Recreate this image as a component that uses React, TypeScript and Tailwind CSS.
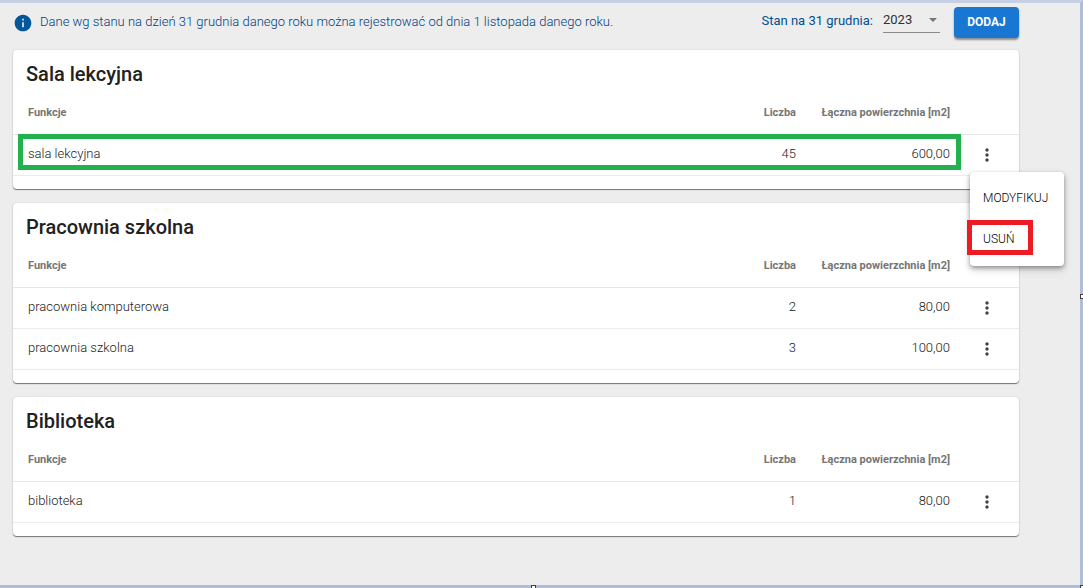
import { MdInfo, MdMoreVert } from "react-icons/md";

type Row = { name: string; count: number; area: string; open?: boolean };

const sections: { title: string; rows: Row[] }[] = [
    {
        title: "Sala lekcyjna",
        rows: [{ name: "sala lekcyjna", count: 45, area: "600,00", open: true }],
    },
    {
        title: "Pracownia szkolna",
        rows: [
            { name: "pracownia komputerowa", count: 2, area: "80,00" },
            { name: "pracownia szkolna", count: 3, area: "100,00" },
        ],
    },
    {
        title: "Biblioteka",
        rows: [{ name: "biblioteka", count: 1, area: "80,00" }],
    },
];

const RowMenu = () => (
    <div
        role="menu"
        className="absolute top-[37px] left-[7px] z-10 w-[94px] rounded bg-white pt-[5px] pb-[7px] text-left shadow-[0_2px_4px_rgba(0,0,0,0.35),0_4px_8px_rgba(0,0,0,0.15)]"
    >
        <button role="menuitem" className="block h-[41px] w-full px-[13px] text-left text-xs font-light text-black">
            MODYFIKUJ
        </button>
        <button role="menuitem" className="relative block h-[41px] w-full px-[13px] text-left text-xs font-light text-black">
            USUŃ
            {/* Red marker around the delete action */}
            <span className="pointer-events-none absolute top-0.5 -left-[3px] h-[35px] w-[66px] border-5 border-[#ed1c24]" />
        </button>
    </div>
);

const Section = ({ title, rows }: { title: string; rows: Row[] }) => (
    <section className="rounded bg-white pb-[13px] shadow-[0_1px_1px_rgba(0,0,0,0.5),0_0_2px_rgba(0,0,0,0.12)]">
        <h2 className="px-[13px] pt-2.5 text-xl leading-7 font-medium text-[#212121]">{title}</h2>
        <table className="w-full border-separate border-spacing-0 text-[13px] text-[#212121]">
            <thead>
                <tr className="h-[47px] text-[11px] text-[#757575]">
                    <th className="border-b border-[#e6e6e6] pt-1 pl-[15px] text-left font-bold">Funkcje</th>
                    <th className="w-32 border-b border-[#e6e6e6] pt-1 pr-[13px] text-right font-bold">Liczba</th>
                    <th className="w-[154px] border-b border-[#e6e6e6] pt-1 pr-[13px] text-right font-bold whitespace-nowrap">
                        Łączna powierzchnia [m2]
                    </th>
                    <td className="w-14 border-b border-[#e6e6e6]" />
                </tr>
            </thead>
            <tbody className="font-light">
                {rows.map((row) => (
                    <tr key={row.name} className="relative h-[41px]">
                        <td className="border-b border-[#ececec] pb-0.5 pl-[15px]">
                            {row.name}
                            {/* Green marker around the selected row */}
                            {row.open && (
                                <span className="pointer-events-none absolute -top-px right-[58px] left-[5px] h-9 border-5 border-[#22b14c]" />
                            )}
                        </td>
                        <td className="border-b border-[#ececec] pr-[13px] pb-0.5 text-right">{row.count}</td>
                        <td className="border-b border-[#ececec] pr-[13px] pb-0.5 text-right">{row.area}</td>
                        <td className="relative border-b border-[#ececec] pl-3.5">
                            <button aria-label="Akcje" className="block text-[#424242]">
                                <MdMoreVert size={20} />
                            </button>
                            {row.open && <RowMenu />}
                        </td>
                    </tr>
                ))}
            </tbody>
        </table>
    </section>
);

export default function App() {
    return (
        <div className="relative min-h-screen border-t-3 border-r-3 border-b-3 border-[#b0bdd6] border-t-[#c7d0e3] bg-[#ededed] font-['Roboto',sans-serif]">
            <main className="mr-[61px] ml-[13px]">
                <header className="flex h-[47px] items-start pt-1 text-[13px] text-[#01508f]">
                    <p className="flex h-8 items-center gap-[7px] font-light text-[#003f7a]">
                        <MdInfo size={20} className="text-[#01579b]" />
                        <span className="pb-0.5">
                            Dane wg stanu na dzień 31 grudnia danego roku można rejestrować od dnia 1 listopada danego roku.
                        </span>
                    </p>
                    <label htmlFor="rok" className="ml-auto flex h-7 items-center">
                        Stan na 31 grudnia:
                    </label>
                    <div className="relative ml-2.5">
                        <select
                            id="rok"
                            defaultValue="2023"
                            className="block h-[26px] w-[57px] appearance-none border-b border-[#8a8a8a] text-[13px] text-[#303030]"
                        >
                            <option>2023</option>
                        </select>
                        {/* Drop-down arrow */}
                        <span className="pointer-events-none absolute top-[11px] right-[3px] border-x-4 border-t-4 border-x-transparent border-t-[#757575]" />
                    </div>
                    <button className="ml-3.5 h-[31px] w-[65px] rounded bg-[#1976d2] pb-0.5 text-xs font-bold text-white shadow-[0_2px_2px_rgba(0,0,0,0.4)]">
                        DODAJ
                    </button>
                </header>
                <div className="flex flex-col gap-3.5">
                    {sections.map((section) => (
                        <Section key={section.title} {...section} />
                    ))}
                </div>
            </main>
            {/* Resize handles of the frame */}
            <span className="absolute top-1/2 -right-[3px] h-[5px] w-[3px] border border-r-0 border-[#404040] bg-white" />
            <span className="absolute -right-[3px] -bottom-[3px] size-[3px] border-t border-l border-[#404040] bg-white" />
            <span className="absolute right-1/2 -bottom-[3px] mr-1 h-[3px] w-[5px] border border-b-0 border-[#404040] bg-white" />
        </div>
    );
}
